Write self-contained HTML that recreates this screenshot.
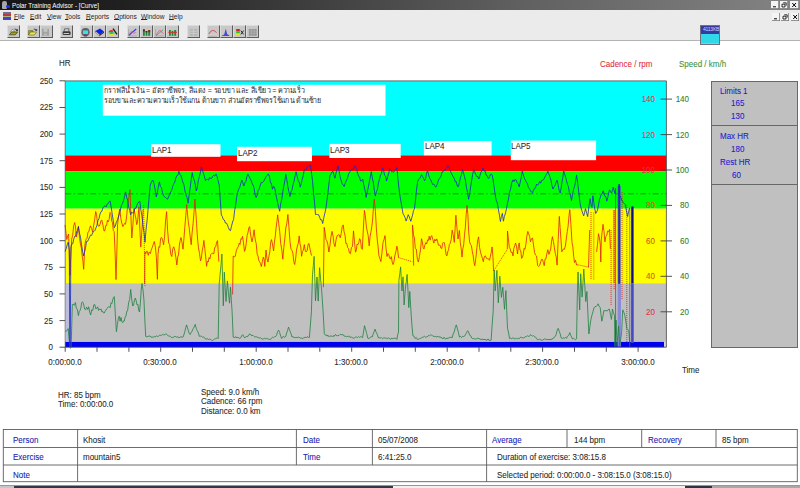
<!DOCTYPE html>
<html><head><meta charset="utf-8"><title>Polar Training Advisor - [Curve]</title>
<style>
html,body{margin:0;padding:0;background:#fff;}
body{width:800px;height:488px;position:relative;overflow:hidden;font-family:"Liberation Sans",sans-serif;}
.t{position:absolute;white-space:nowrap;font-size:8.6px;line-height:10px;color:#2a2a2a;font-family:"Liberation Sans",sans-serif;transform:scaleX(0.9302);transform-origin:0 0;-webkit-text-stroke:0.08px currentColor;}
.c{position:absolute;white-space:nowrap;line-height:10px;font-family:"Liberation Sans",sans-serif;}
.tb{position:absolute;top:25.4px;width:13.1px;height:12.2px;background:#c8c8c8;box-sizing:border-box;border-top:0.5px solid #dcdcdc;border-left:0.5px solid #dcdcdc;border-right:1px solid #5c5c5c;border-bottom:1px solid #5c5c5c;}
</style></head><body>
<svg width="800" height="488" viewBox="0 0 800 488" style="position:absolute;left:0;top:0">
<rect x="65.2" y="80.9" width="601.1999999999999" height="74.5" fill="#00ffff"/>
<rect x="65.2" y="155.4" width="601.1999999999999" height="16.0" fill="#ff0000"/>
<rect x="65.2" y="171.4" width="601.1999999999999" height="37.3" fill="#00ff00"/>
<rect x="65.2" y="208.7" width="601.1999999999999" height="74.6" fill="#ffff00"/>
<rect x="65.2" y="283.3" width="601.1999999999999" height="58.6" fill="#c0c0c0"/>
<rect x="65.2" y="341.9" width="598.8" height="5.3" fill="#0000f0"/>
<rect x="664" y="341.9" width="2.4" height="5.3" fill="#d4d4ec"/>
<rect x="102.8" y="84.8" width="282.7" height="30.9" fill="#fff"/>
<rect x="151.2" y="144.2" width="69.3" height="12.6" fill="#fff"/>
<rect x="237" y="146.8" width="75" height="14.4" fill="#fff"/>
<rect x="329.4" y="143.9" width="71.3" height="14.1" fill="#fff"/>
<rect x="423.9" y="141" width="67.7" height="14.3" fill="#fff"/>
<rect x="510.8" y="140.6" width="85.3" height="19.6" fill="#fff"/>
<line x1="65.2" y1="193.8" x2="666.4" y2="193.8" stroke="#406040" stroke-width="0.8" stroke-dasharray="6 2.5 1.5 2.5"/>
<line x1="65.2" y1="80.9" x2="65.2" y2="347.2" stroke="#484848" stroke-width="0.7"/>
<line x1="65.2" y1="80.9" x2="666.4" y2="80.9" stroke="#505050" stroke-width="0.8"/>
<line x1="666.4" y1="80.9" x2="666.4" y2="347.2" stroke="#484848" stroke-width="0.8"/>
<line x1="65.2" y1="347.2" x2="666.4" y2="347.2" stroke="#404040" stroke-width="0.8"/>
<line x1="59.5" y1="347.2" x2="65.2" y2="347.2" stroke="#404040" stroke-width="0.9"/>
<line x1="59.5" y1="320.6" x2="65.2" y2="320.6" stroke="#404040" stroke-width="0.9"/>
<line x1="59.5" y1="293.9" x2="65.2" y2="293.9" stroke="#404040" stroke-width="0.9"/>
<line x1="59.5" y1="267.3" x2="65.2" y2="267.3" stroke="#404040" stroke-width="0.9"/>
<line x1="59.5" y1="240.7" x2="65.2" y2="240.7" stroke="#404040" stroke-width="0.9"/>
<line x1="59.5" y1="214.0" x2="65.2" y2="214.0" stroke="#404040" stroke-width="0.9"/>
<line x1="59.5" y1="187.4" x2="65.2" y2="187.4" stroke="#404040" stroke-width="0.9"/>
<line x1="59.5" y1="160.7" x2="65.2" y2="160.7" stroke="#404040" stroke-width="0.9"/>
<line x1="59.5" y1="134.1" x2="65.2" y2="134.1" stroke="#404040" stroke-width="0.9"/>
<line x1="59.5" y1="107.5" x2="65.2" y2="107.5" stroke="#404040" stroke-width="0.9"/>
<line x1="59.5" y1="80.8" x2="65.2" y2="80.8" stroke="#404040" stroke-width="0.9"/>
<line x1="660.5" y1="311.8" x2="672" y2="311.8" stroke="#404040" stroke-width="0.9"/>
<line x1="660.5" y1="276.3" x2="672" y2="276.3" stroke="#404040" stroke-width="0.9"/>
<line x1="660.5" y1="240.9" x2="672" y2="240.9" stroke="#404040" stroke-width="0.9"/>
<line x1="660.5" y1="205.4" x2="672" y2="205.4" stroke="#404040" stroke-width="0.9"/>
<line x1="660.5" y1="170.0" x2="672" y2="170.0" stroke="#404040" stroke-width="0.9"/>
<line x1="660.5" y1="134.6" x2="672" y2="134.6" stroke="#404040" stroke-width="0.9"/>
<line x1="660.5" y1="99.1" x2="672" y2="99.1" stroke="#404040" stroke-width="0.9"/>
<line x1="65.2" y1="347.2" x2="65.2" y2="351.8" stroke="#404040" stroke-width="0.9"/>
<line x1="97.0" y1="347.2" x2="97.0" y2="351.8" stroke="#404040" stroke-width="0.9"/>
<line x1="128.9" y1="347.2" x2="128.9" y2="351.8" stroke="#404040" stroke-width="0.9"/>
<line x1="160.7" y1="347.2" x2="160.7" y2="351.8" stroke="#404040" stroke-width="0.9"/>
<line x1="192.5" y1="347.2" x2="192.5" y2="351.8" stroke="#404040" stroke-width="0.9"/>
<line x1="224.3" y1="347.2" x2="224.3" y2="351.8" stroke="#404040" stroke-width="0.9"/>
<line x1="256.2" y1="347.2" x2="256.2" y2="351.8" stroke="#404040" stroke-width="0.9"/>
<line x1="288.0" y1="347.2" x2="288.0" y2="351.8" stroke="#404040" stroke-width="0.9"/>
<line x1="319.8" y1="347.2" x2="319.8" y2="351.8" stroke="#404040" stroke-width="0.9"/>
<line x1="351.7" y1="347.2" x2="351.7" y2="351.8" stroke="#404040" stroke-width="0.9"/>
<line x1="383.5" y1="347.2" x2="383.5" y2="351.8" stroke="#404040" stroke-width="0.9"/>
<line x1="415.3" y1="347.2" x2="415.3" y2="351.8" stroke="#404040" stroke-width="0.9"/>
<line x1="447.2" y1="347.2" x2="447.2" y2="351.8" stroke="#404040" stroke-width="0.9"/>
<line x1="479.0" y1="347.2" x2="479.0" y2="351.8" stroke="#404040" stroke-width="0.9"/>
<line x1="510.8" y1="347.2" x2="510.8" y2="351.8" stroke="#404040" stroke-width="0.9"/>
<line x1="542.6" y1="347.2" x2="542.6" y2="351.8" stroke="#404040" stroke-width="0.9"/>
<line x1="574.5" y1="347.2" x2="574.5" y2="351.8" stroke="#404040" stroke-width="0.9"/>
<line x1="606.3" y1="347.2" x2="606.3" y2="351.8" stroke="#404040" stroke-width="0.9"/>
<line x1="638.1" y1="347.2" x2="638.1" y2="351.8" stroke="#404040" stroke-width="0.9"/>
<rect x="65.6" y="283.6" width="4.7" height="58" fill="#bcbcdc"/>
<rect x="613" y="210" width="2.2" height="73" fill="#c8a030" opacity="0.8"/>
<rect x="617.6" y="186" width="3.2" height="97.5" fill="#5058c8" opacity="0.9"/>
<rect x="617.6" y="283.5" width="3.4" height="63" fill="#8484d8" opacity="0.9"/>
<path d="M65.1 331.2 L66.1 331.1 L67.2 330.4 L68.2 328.6 L69.0 338.3 L69.8 346.3 L70.5 348.3 L71.2 346.3 L72.3 304.5 L73.3 304.1 L74.4 305.4 L75.4 302.5 L76.4 308.7 L77.4 309.3 L78.4 315.6 L79.2 311.7 L80.0 310.5 L80.9 308.0 L81.7 302.6 L82.5 301.8 L83.5 303.6 L84.6 309.0 L85.6 309.8 L86.6 307.1 L87.7 309.5 L88.7 306.8 L89.7 312.1 L90.7 315.0 L91.7 309.8 L92.8 310.5 L93.8 304.8 L94.8 304.6 L95.9 309.0 L96.9 308.0 L97.7 306.8 L98.5 310.4 L99.4 308.8 L100.2 309.9 L101.0 308.9 L101.8 311.9 L102.6 311.2 L103.5 312.9 L104.3 313.0 L105.1 311.2 L105.9 310.2 L106.8 308.5 L107.7 307.7 L108.5 306.7 L109.3 307.1 L110.2 307.6 L111.0 302.8 L111.8 303.7 L112.7 299.8 L113.5 297.4 L114.3 296.6 L115.3 314.0 L116.4 331.7 L117.4 324.7 L118.4 317.9 L119.2 316.2 L120.1 321.2 L121.0 317.4 L121.8 321.5 L122.7 322.7 L123.5 320.9 L124.3 321.0 L125.1 317.0 L126.0 316.0 L126.8 311.2 L127.6 310.8 L128.6 302.8 L129.7 299.4 L130.7 289.5 L131.7 298.9 L132.7 306.0 L133.6 305.1 L134.5 299.8 L135.4 298.0 L136.2 301.0 L137.0 304.8 L137.9 304.3 L138.7 310.0 L139.5 312.0 L140.3 303.7 L141.2 290.1 L142.0 283.5 L143.0 290.0 L144.0 300.9 L144.8 319.2 L145.7 336.4 L146.8 336.8 L147.9 336.4 L148.9 336.2 L150.0 335.9 L151.1 337.2 L152.2 337.1 L153.2 337.3 L154.3 336.4 L155.3 336.9 L156.3 335.8 L157.3 336.5 L158.4 336.2 L159.4 335.4 L160.4 335.4 L161.5 335.4 L162.5 334.3 L163.5 334.8 L164.5 335.0 L165.6 333.8 L166.6 334.3 L167.6 335.1 L168.6 336.2 L169.7 336.0 L170.7 336.7 L171.7 337.6 L172.8 337.6 L173.8 337.0 L174.8 336.4 L175.8 336.6 L176.8 337.3 L177.9 336.7 L178.9 337.9 L179.9 337.3 L180.9 336.6 L182.0 337.4 L183.0 337.0 L183.9 334.8 L184.8 331.7 L185.7 327.9 L186.6 324.9 L187.5 327.7 L188.3 330.4 L189.2 333.3 L190.1 334.5 L191.1 332.7 L192.1 331.1 L193.2 328.5 L194.2 327.0 L195.2 324.4 L196.2 328.3 L197.2 330.5 L198.3 332.6 L199.3 336.3 L200.3 336.1 L201.4 336.3 L202.4 337.2 L203.4 336.9 L204.4 337.5 L205.4 339.0 L206.5 339.1 L207.5 338.6 L208.5 339.9 L209.6 338.8 L210.6 339.6 L211.6 340.2 L212.5 340.6 L213.5 339.8 L214.4 339.0 L215.4 338.8 L216.3 338.5 L217.3 337.7 L218.2 338.6 L219.2 284.4 L220.1 274.4 L221.0 264.8 L221.9 254.0 L223.3 305.8 L224.3 272.2 L225.2 287.7 L226.0 301.6 L227.4 280.9 L228.4 292.7 L229.5 303.2 L230.5 287.2 L231.3 299.7 L232.1 311.5 L233.2 337.1 L234.1 337.6 L235.1 337.2 L236.0 336.7 L236.9 338.0 L237.9 337.3 L238.8 337.8 L239.8 338.5 L240.7 337.8 L241.8 335.7 L242.8 334.6 L243.8 336.7 L244.8 338.0 L245.8 336.8 L246.9 336.4 L247.9 336.4 L249.0 334.4 L250.0 333.9 L251.0 335.3 L252.0 335.4 L253.1 335.4 L254.1 336.4 L255.1 337.1 L256.1 336.6 L257.1 337.2 L258.1 337.3 L259.2 338.3 L260.2 337.6 L261.2 338.3 L262.2 339.1 L263.2 339.1 L264.3 338.3 L265.3 338.8 L266.3 338.4 L267.3 338.7 L268.4 339.0 L269.4 339.4 L270.4 339.6 L271.5 338.1 L272.5 337.2 L273.5 337.7 L274.6 336.6 L275.6 336.6 L276.6 335.2 L277.6 331.6 L278.6 330.1 L279.6 332.4 L280.7 336.2 L281.7 338.5 L282.7 336.8 L283.8 336.5 L284.8 337.4 L285.8 336.2 L286.7 332.9 L287.6 330.4 L288.5 327.1 L289.4 329.4 L290.2 331.9 L291.1 333.8 L292.0 337.0 L293.0 336.6 L294.1 337.6 L295.1 337.7 L296.1 337.0 L297.1 338.0 L298.1 337.1 L299.2 337.3 L300.2 338.2 L301.2 337.9 L302.2 338.6 L303.3 338.0 L304.3 338.0 L305.3 336.9 L306.3 338.0 L307.4 336.6 L308.4 337.4 L309.4 337.5 L310.4 325.0 L311.4 311.9 L312.5 274.6 L313.3 265.7 L314.1 256.4 L315.5 300.8 L316.2 289.7 L317.0 277.0 L318.2 301.1 L319.6 267.7 L320.6 279.1 L321.7 290.8 L323.1 311.7 L324.3 333.6 L325.2 335.0 L326.1 335.7 L327.1 334.9 L328.0 336.5 L328.9 335.7 L329.9 336.7 L330.9 335.5 L332.0 336.7 L333.0 335.7 L334.0 336.5 L335.0 334.8 L336.0 334.8 L337.1 336.0 L338.1 335.6 L339.1 335.4 L340.1 334.4 L341.2 334.6 L342.2 334.8 L343.2 334.6 L344.2 336.2 L345.2 336.1 L346.3 336.7 L347.3 336.6 L348.3 336.3 L349.3 336.1 L350.3 337.6 L351.4 336.8 L352.4 337.9 L353.4 338.1 L354.4 338.0 L355.4 337.1 L356.5 337.0 L357.5 337.6 L358.5 336.6 L359.6 337.4 L360.6 336.6 L361.6 336.9 L362.5 337.8 L363.5 332.1 L364.5 325.7 L365.6 329.4 L366.7 333.5 L367.8 338.2 L368.9 338.6 L370.1 337.5 L371.2 336.7 L372.3 336.9 L373.2 333.9 L374.1 331.8 L375.0 329.2 L376.1 332.1 L377.3 334.5 L378.4 337.9 L379.4 337.8 L380.5 337.9 L381.5 337.7 L382.5 338.7 L383.6 337.9 L384.6 337.9 L385.6 338.2 L386.7 338.2 L387.7 338.6 L388.7 337.9 L389.7 338.6 L390.8 339.3 L391.8 337.9 L392.8 338.9 L393.8 338.5 L394.8 338.1 L395.9 338.2 L396.9 339.4 L397.7 334.9 L398.5 332.2 L398.9 280.3 L399.8 273.8 L400.6 266.9 L402.0 291.0 L403.0 276.9 L404.1 305.0 L405.5 287.0 L406.3 281.5 L407.1 274.4 L408.0 290.9 L408.8 307.6 L409.8 291.4 L411.2 315.3 L412.0 326.1 L412.9 335.7 L414.0 336.2 L415.1 338.5 L416.3 337.5 L417.4 339.5 L418.4 339.2 L419.4 338.8 L420.4 338.5 L421.5 338.0 L422.5 337.0 L423.5 337.0 L424.5 336.3 L425.6 337.2 L426.6 336.8 L427.6 336.6 L428.6 335.3 L429.6 335.7 L430.7 334.8 L431.7 335.3 L432.7 335.8 L433.8 336.5 L434.8 336.3 L435.8 336.6 L436.9 337.0 L437.9 336.1 L438.9 337.3 L439.9 336.6 L441.0 337.6 L442.0 337.7 L443.0 338.9 L444.0 337.3 L445.1 338.9 L446.1 338.9 L447.1 338.0 L448.1 338.7 L449.1 337.3 L450.2 337.5 L451.2 337.2 L452.2 337.7 L453.2 333.9 L454.2 332.0 L455.3 327.4 L456.3 324.9 L457.3 328.5 L458.4 332.3 L459.4 337.0 L460.4 336.3 L461.4 337.6 L462.5 336.3 L463.5 336.5 L464.5 336.2 L465.5 334.6 L466.6 332.6 L467.6 330.7 L468.6 332.0 L469.6 335.2 L470.7 335.7 L471.7 338.0 L472.7 338.7 L473.8 338.4 L474.8 339.2 L475.8 339.0 L476.8 338.6 L477.9 338.0 L478.9 338.9 L479.9 338.8 L480.9 339.6 L482.0 339.1 L483.0 339.3 L484.0 339.7 L485.0 339.2 L486.0 340.0 L487.1 340.2 L488.1 338.9 L489.1 340.4 L490.1 340.4 L491.1 340.2 L492.1 325.4 L493.2 311.3 L494.2 270.1 L495.2 290.9 L496.0 281.4 L496.9 270.4 L498.3 302.8 L499.1 289.6 L499.8 276.2 L500.6 287.1 L501.4 297.4 L502.8 287.3 L503.6 297.4 L504.5 309.3 L505.9 290.6 L506.7 310.2 L507.5 328.2 L508.6 333.0 L509.6 338.6 L510.6 338.1 L511.6 338.6 L512.5 338.1 L513.5 337.9 L514.5 339.0 L515.5 338.7 L516.4 338.3 L517.4 338.8 L518.4 338.4 L519.4 338.6 L520.3 337.3 L521.3 337.4 L522.3 337.7 L523.3 337.9 L524.3 337.8 L525.4 336.4 L526.4 336.7 L527.4 335.7 L528.4 336.4 L529.5 336.2 L530.5 334.6 L531.5 335.5 L532.5 336.0 L533.6 335.7 L534.6 336.8 L535.6 337.1 L536.6 338.8 L537.7 339.9 L538.7 339.5 L539.7 339.2 L540.8 339.9 L541.8 340.3 L542.8 340.0 L543.8 339.4 L544.9 338.7 L545.9 339.6 L546.9 339.3 L547.9 339.8 L549.0 339.3 L550.0 339.6 L551.0 339.6 L552.0 338.8 L553.0 338.8 L554.1 337.2 L555.1 336.6 L556.1 334.7 L557.2 330.1 L558.2 328.4 L559.2 331.2 L560.2 333.9 L561.2 337.9 L562.2 338.5 L563.3 337.9 L564.3 338.3 L565.4 337.4 L566.4 338.4 L567.5 336.2 L568.7 335.3 L569.8 332.6 L570.7 335.3 L571.6 337.0 L572.5 339.0 L573.5 338.2 L574.5 339.2 L575.6 339.7 L576.6 338.7 L577.2 301.1 L578.0 272.0 L578.9 291.8 L579.7 309.9 L580.7 273.8 L582.1 297.1 L583.0 282.5 L583.8 269.1 L584.8 285.7 L585.8 301.5 L586.9 291.5 L587.9 313.2 L588.9 333.9 L589.9 326.4 L590.9 319.7 L591.9 315.3 L593.0 311.6 L594.0 307.8 L595.0 306.5 L596.0 306.7 L597.1 305.5 L598.1 303.8 L599.2 306.3 L600.2 307.6 L601.0 314.8 L601.8 321.2 L602.8 316.8 L603.9 310.5 L605.0 310.9 L606.2 310.6 L607.3 311.0 L608.3 309.6 L609.4 309.1 L610.4 314.2 L611.4 319.4 L612.5 309.0 L613.5 312.9 L614.5 315.8 L614.9 346.3 L616.1 320.1 L617.0 346.3 L617.8 335.5 L618.6 326.0 L619.6 346.3 L620.7 339.3 L621.7 331.6 L622.7 309.8 L623.8 312.2 L624.8 315.3 L625.8 321.2 L626.8 328.3 L627.8 329.4 L628.9 331.9 L629.9 346.3" fill="none" stroke="#208040" stroke-width="0.8" stroke-linejoin="round"/>
<path d="M65.0 224.9 L65.9 232.2 L66.8 239.5 L67.7 236.1 L68.6 234.0 L69.6 262.2 L70.1 275.4 L70.5 262.0 L71.7 239.0 L72.7 235.3 L73.7 225.6 L74.7 222.5 L75.5 227.0 L76.3 237.0 L77.4 233.1 L78.5 226.5 L79.5 237.3 L80.4 243.9 L81.4 248.0 L82.2 256.0 L82.9 260.6 L83.7 269.3 L84.8 245.6 L85.6 240.4 L86.3 239.0 L87.1 238.2 L87.9 232.3 L88.8 231.7 L89.7 228.1 L90.5 225.8 L91.6 228.6 L92.7 232.2 L93.7 225.1 L94.7 219.4 L95.7 211.5 L96.6 214.7 L97.5 223.8 L98.4 226.1 L99.2 226.2 L100.1 224.2 L101.0 220.5 L101.8 220.1 L102.9 224.9 L104.0 231.0 L104.8 230.8 L105.7 225.6 L106.6 225.6 L107.4 220.4 L108.2 221.9 L109.1 219.5 L110.0 212.4 L110.8 213.3 L111.7 221.0 L112.5 222.7 L113.3 230.5 L114.2 231.7 L115.1 252.9 L116.0 279.6 L116.8 254.0 L117.6 224.6 L118.7 214.6 L119.8 209.0 L120.8 218.3 L121.8 223.0 L122.8 226.6 L123.7 225.0 L124.6 223.3 L125.5 224.2 L126.6 216.9 L127.7 204.2 L128.5 200.3 L129.2 194.7 L130.0 189.6 L130.9 215.9 L131.8 238.0 L132.9 224.9 L134.0 208.5 L134.9 214.1 L135.8 218.0 L136.7 224.6 L137.5 222.1 L138.2 215.0 L139.0 206.7 L139.9 229.9 L140.8 247.1 L141.6 234.2 L142.3 224.4 L143.1 209.3" fill="none" stroke="#e02010" stroke-width="0.8" stroke-linejoin="round"/>
<path d="M144.5 283.9 L145.0 251.8 L145.8 253.6 L146.6 251.3 L147.4 251.4 L148.2 255.3 L149.2 252.1 L150.3 253.5 L151.3 249.8 L152.3 247.3 L153.3 244.3 L154.3 241.5 L155.4 247.1 L156.4 257.5 L157.4 279.3 L158.0 254.3 L158.9 246.6 L159.8 247.3 L160.6 238.4 L161.5 237.4 L162.6 240.0 L163.6 244.8 L164.6 236.4 L165.6 220.3 L166.6 211.6 L167.6 230.4 L168.7 243.0 L169.7 244.6 L170.8 254.5 L171.8 256.5 L172.8 248.8 L173.8 246.8 L174.8 250.6 L175.9 257.7 L176.9 265.0 L177.7 257.1 L178.5 254.9 L179.4 245.2 L180.2 240.5 L181.0 237.6 L182.0 242.6 L183.0 249.2 L183.9 239.0 L184.8 227.3 L185.8 215.7 L186.7 204.5 L187.5 214.0 L188.4 222.7 L189.2 227.9 L190.2 237.0 L191.2 244.7 L192.1 232.9 L193.1 223.7 L194.0 212.4 L194.9 199.2 L195.7 210.6 L196.6 223.8 L197.4 237.0 L198.4 247.2 L199.5 253.5 L200.5 260.8 L201.3 258.6 L202.2 250.9 L203.1 246.3 L203.9 240.4 L204.8 248.8 L205.7 256.8 L206.6 266.3 L207.4 261.2 L208.2 262.0 L209.1 257.6 L209.9 258.9 L210.7 254.7 L211.7 253.5 L212.8 253.2 L213.8 253.8 L214.7 247.5 L215.7 247.0 L216.6 242.3 L217.5 240.6 L218.2 251.2 L218.9 261.7" fill="none" stroke="#e02010" stroke-width="0.8" stroke-linejoin="round"/>
<path d="M232.6 294.5 L233.2 256.0 L234.2 256.8 L235.3 256.3 L236.3 250.7 L237.4 248.1 L238.4 246.3 L239.2 243.2 L240.0 244.5 L240.9 238.6 L241.7 239.2 L242.5 236.4 L243.5 242.9 L244.5 251.4 L245.3 249.4 L246.2 243.7 L247.1 235.6 L247.9 233.0 L248.8 227.9 L249.6 226.6 L250.4 233.0 L251.2 238.1 L252.0 241.9 L253.1 236.6 L254.1 229.8 L255.1 239.0 L256.2 243.7 L257.2 254.2 L258.0 256.1 L258.8 260.5 L259.7 261.9 L260.5 263.7 L261.3 266.5 L262.3 261.8 L263.3 257.2 L264.1 259.3 L264.8 266.4 L266.0 250.0 L267.0 258.7 L268.0 262.1 L268.9 256.4 L269.8 252.0 L270.6 242.5 L271.5 239.6 L272.6 245.0 L273.6 250.9 L274.4 242.2 L275.2 236.9 L276.1 227.8 L276.9 221.7 L277.7 214.8 L278.7 223.5 L279.7 231.4 L280.7 243.3 L281.8 249.8 L282.8 259.2 L283.8 247.5 L284.8 238.9 L285.8 227.9 L286.9 223.1 L287.9 214.5 L288.9 226.7 L290.0 241.6 L291.0 249.1 L292.0 250.6 L292.9 253.3 L293.8 261.7 L294.7 264.5 L295.6 258.9 L296.5 250.1 L297.4 246.0 L298.3 243.2 L299.2 235.9 L300.0 243.9 L300.8 246.9 L301.6 256.3 L302.5 251.4 L303.4 250.1 L304.3 244.6 L305.4 251.4 L306.4 251.7 L307.3 250.2 L308.1 244.2 L309.0 243.5 L309.8 247.9 L310.7 252.1 L311.5 255.6" fill="none" stroke="#e02010" stroke-width="0.8" stroke-linejoin="round"/>
<path d="M323.4 287.2 L324.2 227.3 L325.1 232.6 L325.9 239.3 L326.8 240.7 L327.9 244.8 L328.9 252.0 L329.9 245.7 L331.0 236.6 L332.0 231.4 L333.0 235.8 L334.0 243.7 L335.0 246.6 L336.1 239.5 L337.1 235.9 L338.1 234.9 L339.2 234.9 L340.2 237.7 L341.2 233.8 L342.2 226.7 L343.2 224.9 L344.1 232.0 L345.0 235.0 L345.9 243.6 L346.8 243.4 L347.6 247.4 L348.5 248.3 L349.4 252.9 L350.4 253.8 L351.5 247.4 L352.5 246.3 L353.5 230.9 L354.5 241.9 L355.5 252.2 L356.3 250.2 L357.1 244.1 L358.0 244.7 L358.8 242.5 L359.6 238.6 L360.5 240.0 L361.4 248.4 L362.3 249.4 L363.4 228.0 L364.4 210.4 L365.3 215.5 L366.3 226.1 L367.2 231.0 L368.2 235.6 L369.2 245.9 L370.1 236.5 L371.0 231.6 L371.9 226.0 L372.7 219.1 L373.5 205.8 L374.3 199.1 L375.4 211.3 L376.4 228.9 L377.2 239.0 L378.1 246.9 L378.9 255.5 L379.9 258.6 L380.9 261.6 L381.9 253.1 L383.0 242.5 L384.0 239.5 L385.0 235.6 L386.0 248.2 L387.0 256.5 L387.9 253.5 L388.8 254.7 L389.7 258.0 L390.5 259.1 L391.3 256.6 L392.2 262.0 L393.0 264.5 L393.8 262.5 L394.8 255.9 L395.9 251.5 L396.9 246.2 L397.7 249.9 L398.5 257.6" fill="none" stroke="#e02010" stroke-width="0.8" stroke-linejoin="round"/>
<path d="M413.7 265.7 L412.5 224.9 L413.4 234.6 L414.4 238.0 L415.3 248.4 L416.3 249.1 L417.4 259.4 L418.4 262.1 L419.4 256.5 L420.5 249.9 L421.5 238.7 L422.3 241.6 L423.1 247.3 L423.9 249.0 L424.8 245.3 L425.8 242.6 L426.7 244.0 L427.6 239.9 L428.4 240.5 L429.2 236.2 L430.1 240.1 L430.9 236.8 L431.7 235.6 L432.8 239.4 L433.8 243.1 L434.8 239.2 L435.8 241.0 L436.8 238.9 L437.6 241.3 L438.4 245.2 L439.3 245.1 L440.1 245.2 L440.9 248.1 L441.8 248.5 L442.7 243.2 L443.6 242.1 L444.4 242.9 L445.3 248.5 L446.1 254.9 L446.9 255.9 L447.7 251.9 L448.6 249.6 L449.4 244.4 L450.2 243.3 L451.2 239.6 L452.2 230.2 L453.2 234.7 L454.3 242.4 L455.1 228.7 L455.9 215.3 L456.9 227.3 L458.0 239.0 L458.7 235.1 L459.4 230.4 L460.3 242.7 L461.1 247.8 L462.0 257.1 L462.8 248.9 L463.7 244.7 L464.5 234.7 L465.3 227.8 L466.2 214.3 L467.0 205.3 L467.9 214.6 L468.7 231.9 L469.6 241.8 L470.5 244.5 L471.4 245.6 L472.3 251.5 L473.1 255.1 L474.0 262.5 L474.8 265.7 L476.1 256.1 L476.9 247.7 L477.8 239.7 L478.6 236.9 L479.6 247.6 L480.7 252.8 L481.6 255.9 L482.4 258.2 L483.3 261.7 L484.3 256.7 L485.4 255.8 L486.4 258.3 L487.4 258.7 L488.5 258.8 L489.5 260.3 L490.4 256.2 L491.2 252.7 L492.1 246.9 L492.9 256.5 L493.6 270.9" fill="none" stroke="#e02010" stroke-width="0.8" stroke-linejoin="round"/>
<path d="M507.3 249.1 L507.5 231.0 L508.4 238.7 L509.3 247.3 L510.2 248.9 L511.1 252.5 L512.1 252.0 L513.0 255.9 L513.8 248.4 L514.7 246.1 L515.5 243.0 L516.5 246.1 L517.5 254.0 L518.4 246.7 L519.2 242.9 L520.0 250.3 L520.8 250.9 L521.6 258.4 L522.4 257.5 L523.2 254.6 L524.1 248.4 L524.9 249.3 L525.9 244.4 L526.8 236.5 L527.8 231.4 L528.7 233.8 L529.6 236.6 L530.5 241.8 L531.5 238.7 L532.5 238.0 L533.5 244.9 L534.6 252.7 L535.6 255.2 L536.6 256.1 L537.6 265.4 L538.6 266.5 L539.6 265.6 L540.7 261.9 L541.7 259.2 L542.5 259.5 L543.4 262.5 L544.2 265.7 L545.1 258.9 L545.9 258.9 L546.8 254.0 L547.8 249.7 L548.9 254.4 L549.9 251.5 L550.7 249.0 L551.6 241.1 L552.4 236.7 L553.4 241.5 L554.4 247.6 L555.3 253.5 L556.2 256.6 L557.1 265.1 L558.2 239.5 L559.3 216.4 L560.1 227.4 L561.0 240.1 L561.8 251.8 L562.6 250.2 L563.5 248.9 L564.3 249.4 L565.3 246.2 L566.3 238.9 L567.3 231.3 L568.1 226.2 L569.0 215.6 L569.8 209.7 L570.9 224.3 L572.0 242.5 L572.8 246.3 L573.7 256.4 L574.5 262.5 L575.5 260.3 L576.6 265.0 L577.6 264.8" fill="none" stroke="#e02010" stroke-width="0.8" stroke-linejoin="round"/>
<path d="M588.5 267.4 L589.7 230.0" fill="none" stroke="#e02010" stroke-width="0.8" stroke-linejoin="round"/>
<path d="M596.6 251.9 L597.5 244.3 L598.5 233.7 L599.4 237.6 L600.3 245.0 L600.8 262.0 L601.3 240.0 L602.1 232.1 L603.0 224.3 L604.0 231.5 L604.9 241.8 L605.8 236.6 L606.8 235.2 L607.7 231.0 L608.6 231.8 L609.5 229.4 L610.4 248.8" fill="none" stroke="#e02010" stroke-width="0.8" stroke-linejoin="round"/>
<path d="M143.6 205 L145 287" fill="none" stroke="#e02010" stroke-width="0.8" stroke-dasharray="1.1 0.9"/>
<path d="M398.5 257.6 L412.3 261.7" fill="none" stroke="#e02010" stroke-width="0.8" stroke-dasharray="1.1 0.9"/>
<path d="M493.6 270.9 L507.3 249.4" fill="none" stroke="#e02010" stroke-width="0.8" stroke-dasharray="1.1 0.9"/>
<path d="M577.6 264.8 L588.5 267" fill="none" stroke="#e02010" stroke-width="0.8" stroke-dasharray="1.1 0.9"/>
<path d="M591 212 V280" fill="none" stroke="#e02010" stroke-width="0.8" stroke-dasharray="1.1 0.9"/>
<path d="M593.8 212.5 V280" fill="none" stroke="#e02010" stroke-width="0.8" stroke-dasharray="1.1 0.9"/>
<path d="M611.1 230 V305" fill="none" stroke="#e02010" stroke-width="0.8" stroke-dasharray="1.1 0.9"/>
<path d="M626.8 205 V342" fill="none" stroke="#e02010" stroke-width="0.8" stroke-dasharray="1.1 0.9"/>
<path d="M622 192 V300" fill="none" stroke="#e02010" stroke-width="0.8" stroke-dasharray="1.1 0.9"/>
<path d="M614.2 210 V290" fill="none" stroke="#e02010" stroke-width="0.8" stroke-dasharray="1.1 0.9"/>
<path d="M65.1 251.6 L66.1 248.8 L67.2 244.9 L68.2 242.2 L69.3 250.2 L69.8 346.0 L70.2 346.0 L70.9 247.3 L71.8 243.8 L72.8 243.7 L73.7 239.2 L74.7 236.4 L75.6 236.2 L76.5 231.9 L77.5 230.4 L78.4 226.6 L79.4 232.9 L80.5 237.2 L81.5 244.7 L82.6 251.3 L83.6 256.0 L84.6 252.1 L85.6 247.2 L86.6 241.3 L87.6 241.3 L88.7 239.2 L89.7 236.7 L90.7 235.0 L91.7 235.3 L92.8 232.4 L93.8 231.6 L94.9 230.5 L95.9 227.9 L96.9 225.6 L97.9 220.6 L99.0 218.6 L100.0 214.1 L101.0 211.7 L102.0 211.1 L103.0 207.5 L104.1 206.5 L105.1 205.6 L106.1 206.9 L107.1 204.1 L108.2 203.6 L109.2 201.5 L110.2 201.0 L111.2 207.3 L112.2 213.8 L113.3 221.2 L114.3 227.7 L115.3 226.0 L116.3 222.3 L117.4 220.2 L118.4 217.1 L119.4 213.8 L120.4 210.0 L121.5 204.9 L122.5 203.6 L123.5 200.4 L124.6 196.6 L125.6 191.9 L126.6 197.1 L127.6 200.2 L128.7 206.8 L129.7 210.6 L130.7 214.7 L131.7 212.1 L132.8 213.1 L133.8 212.1 L134.8 208.3 L135.8 208.4 L136.8 205.5 L137.9 203.1 L138.9 201.9 L139.9 201.4 L140.9 210.4 L141.9 215.9 L143.0 226.0 L144.0 232.3 L145.0 242.3 L146.0 230.0 L147.1 220.3 L148.1 209.1 L149.2 196.1 L150.2 185.4 L151.2 182.6 L152.2 180.5 L153.2 180.7 L154.2 184.5 L155.3 190.5 L156.3 196.9 L157.3 192.5 L158.4 186.2 L159.4 181.8 L160.4 186.6 L161.4 187.7 L162.5 192.7 L163.5 195.4 L164.5 196.8 L165.5 197.5 L166.6 198.4 L167.6 199.2 L168.6 196.8 L169.7 194.2 L170.7 191.8 L171.7 190.3 L172.7 186.4 L173.8 183.7 L174.8 182.1 L175.8 178.0 L176.8 175.7 L177.9 175.3 L178.9 171.3 L179.9 174.3 L180.9 175.3 L182.0 179.4 L183.0 182.6 L184.0 185.1 L185.0 191.1 L186.1 195.2 L187.1 197.5 L188.1 203.2 L189.1 195.2 L190.1 188.2 L191.2 179.5 L192.2 172.6 L193.2 177.7 L194.2 180.0 L195.3 184.7 L196.3 191.0 L197.3 187.5 L198.3 180.5 L199.4 176.5 L200.4 172.2 L201.4 166.9 L202.4 170.1 L203.4 173.3 L204.5 176.8 L205.5 180.7 L206.5 179.4 L207.5 179.3 L208.6 180.1 L209.6 177.3 L210.6 178.5 L211.7 178.3 L212.8 176.2 L213.8 175.1 L214.9 176.1 L216.0 173.9 L217.1 176.7 L218.1 181.0 L219.2 184.9 L220.2 198.7 L221.3 215.0 L222.3 216.4 L223.3 219.6 L224.4 220.0 L225.4 223.0 L226.4 223.0 L227.4 224.8 L228.4 227.6 L229.5 230.1 L230.5 230.6 L231.5 226.1 L232.6 222.0 L233.6 219.4 L234.6 210.9 L235.6 205.4 L236.6 197.4 L237.6 192.4 L238.7 189.2 L239.7 187.4 L240.8 183.4 L241.8 180.0 L242.8 182.6 L243.8 186.0 L244.8 182.9 L245.9 181.4 L246.9 176.6 L247.9 174.1 L248.9 176.1 L249.9 178.1 L251.0 180.2 L252.0 183.2 L253.0 185.0 L254.1 188.1 L255.1 194.7 L256.1 197.5 L257.1 195.4 L258.1 190.5 L259.2 189.1 L260.2 185.3 L261.2 182.4 L262.2 182.8 L263.3 181.8 L264.3 180.0 L265.3 178.2 L266.3 176.2 L267.4 175.1 L268.4 173.9 L269.4 176.5 L270.4 181.8 L271.5 184.4 L272.5 189.2 L273.5 186.2 L274.5 187.2 L275.5 192.1 L276.6 197.8 L277.6 202.6 L278.7 207.6 L279.7 211.3 L280.7 203.5 L281.7 199.7 L282.8 191.7 L283.8 186.0 L284.8 181.0 L285.8 174.3 L286.8 179.7 L287.9 187.0 L288.9 191.6 L289.9 196.6 L290.9 192.0 L292.0 189.9 L293.0 184.5 L294.0 181.4 L295.1 175.9 L296.1 171.8 L297.1 176.0 L298.1 180.5 L299.2 182.0 L300.2 187.1 L301.2 183.8 L302.2 179.4 L303.3 175.3 L304.3 169.4 L305.3 169.8 L306.3 169.7 L307.4 166.2 L308.4 166.1 L309.4 165.2 L310.4 165.1 L311.4 172.6 L312.5 180.5 L313.5 193.0 L314.5 202.1 L315.5 214.6 L316.5 214.4 L317.6 214.6 L318.6 214.7 L319.6 217.2 L320.6 219.9 L321.7 219.8 L322.7 223.5 L323.7 218.1 L324.8 213.4 L325.8 209.0 L326.8 201.5 L327.9 193.1 L328.9 184.2 L329.9 175.9 L330.9 174.2 L332.0 171.8 L333.0 171.4 L334.0 175.5 L335.0 178.2 L336.0 173.0 L337.1 169.2 L338.1 165.9 L339.1 171.2 L340.1 176.6 L341.1 180.3 L342.1 183.5 L343.2 185.0 L344.2 186.5 L345.2 183.3 L346.2 180.9 L347.3 178.7 L348.3 174.9 L349.3 172.6 L350.3 171.1 L351.4 169.4 L352.4 169.3 L353.4 168.8 L354.5 165.8 L355.5 166.0 L356.5 168.7 L357.5 173.1 L358.6 176.1 L359.6 177.2 L360.6 181.1 L361.6 180.9 L362.7 179.1 L363.8 185.2 L365.0 189.9 L366.1 197.4 L367.1 192.3 L368.2 187.9 L369.2 182.5 L370.3 177.0 L371.3 171.7 L372.3 177.9 L373.4 182.8 L374.4 190.8 L375.4 196.1 L376.4 191.7 L377.4 189.6 L378.4 183.1 L379.5 179.2 L380.5 175.1 L381.5 173.5 L382.5 167.7 L383.5 169.8 L384.6 175.4 L385.6 176.2 L386.6 181.1 L387.6 177.0 L388.7 173.4 L389.7 168.9 L390.7 169.8 L391.8 171.9 L392.8 171.6 L393.8 172.1 L394.9 170.3 L395.9 169.9 L396.9 167.6 L397.9 178.6 L399.0 188.7 L400.0 196.2 L401.0 201.8 L402.0 208.0 L403.0 213.8 L404.0 215.2 L405.1 217.7 L406.1 221.1 L407.1 218.3 L408.2 214.7 L409.1 216.4 L409.9 218.7 L410.8 221.3 L411.7 217.9 L412.6 215.1 L413.4 210.9 L414.3 209.2 L415.3 201.8 L416.4 191.1 L417.4 182.9 L418.4 179.4 L419.4 179.0 L420.5 177.2 L421.5 174.6 L422.5 176.4 L423.5 178.4 L424.5 180.7 L425.5 178.7 L426.6 173.2 L427.6 170.7 L428.6 174.9 L429.6 178.2 L430.7 179.8 L431.7 182.4 L432.7 184.5 L433.8 184.1 L434.8 185.7 L435.8 187.2 L436.8 185.4 L437.9 182.0 L438.9 179.1 L439.9 178.0 L441.0 176.3 L442.0 172.0 L443.0 171.9 L444.0 170.0 L445.1 170.3 L446.1 168.4 L447.1 166.4 L448.1 165.6 L449.1 166.9 L450.1 170.7 L451.2 172.7 L452.2 174.9 L453.2 176.8 L454.3 178.6 L455.3 181.9 L456.3 181.7 L457.4 186.3 L458.4 186.6 L459.4 182.6 L460.4 177.8 L461.5 174.6 L462.5 169.7 L463.5 173.1 L464.5 176.7 L465.5 180.9 L466.5 187.8 L467.6 192.4 L468.6 199.3 L469.6 194.4 L470.6 186.9 L471.7 180.2 L472.7 174.3 L473.7 169.5 L474.7 171.8 L475.8 174.8 L476.8 176.5 L477.9 176.6 L478.9 179.0 L479.9 175.7 L480.9 172.3 L482.0 170.9 L483.0 167.8 L484.0 170.7 L485.0 170.9 L486.1 175.1 L487.1 175.6 L488.1 178.3 L489.1 178.1 L490.1 175.0 L491.2 174.0 L492.2 174.8 L493.2 180.5 L494.2 187.5 L495.2 194.9 L496.2 200.2 L497.3 202.8 L498.3 208.9 L499.4 215.1 L500.4 221.5 L501.4 216.5 L502.4 213.4 L503.4 221.2 L504.4 216.4 L505.5 213.1 L506.5 208.6 L507.5 203.1 L508.5 199.0 L509.6 191.9 L510.6 189.1 L511.6 183.2 L513.0 179.9 L514.0 181.6 L515.1 179.4 L516.1 179.9 L517.1 182.7 L518.2 183.6 L519.2 186.9 L520.2 182.0 L521.3 177.4 L522.3 170.9 L523.3 174.8 L524.3 178.2 L525.3 180.1 L526.4 182.3 L527.4 183.7 L528.4 187.7 L529.4 188.5 L530.5 190.9 L531.5 192.1 L532.5 192.9 L533.5 189.7 L534.5 189.2 L535.6 187.1 L536.6 184.1 L537.6 185.2 L538.7 183.7 L539.7 181.3 L540.7 183.2 L541.8 180.0 L542.8 180.2 L543.8 179.4 L544.8 177.1 L545.9 175.2 L546.9 173.6 L547.9 171.2 L548.9 174.2 L549.9 177.2 L551.0 180.4 L552.0 185.9 L553.0 189.1 L554.0 186.8 L555.0 185.4 L556.1 182.1 L557.1 180.1 L558.1 184.6 L559.2 190.6 L560.2 193.1 L561.1 188.2 L562.0 181.7 L562.8 177.8 L563.7 171.1 L564.6 173.8 L565.6 177.1 L566.5 180.6 L567.5 184.4 L568.4 186.4 L569.4 192.5 L570.5 195.0 L571.5 200.6 L572.5 194.6 L573.5 189.5 L574.6 186.5 L575.6 181.2 L576.6 174.9 L577.7 183.5 L578.9 193.3 L580.0 203.1 L580.9 207.4 L581.8 210.4 L582.8 213.5 L583.7 215.9 L584.6 212.5 L585.5 208.6 L586.6 212.9 L587.7 216.6 L588.9 206.8 L590.1 198.6 L591.0 204.5 L592.0 207.4 L592.9 195.8 L593.8 202.7 L594.8 209.0 L595.7 213.5 L596.6 212.0 L597.5 210.1 L598.5 204.9 L599.4 199.8 L600.3 197.5 L601.2 194.2 L602.2 193.9 L603.1 190.7 L604.0 193.5 L605.0 196.5 L605.9 196.7 L606.8 201.2 L607.7 197.7 L608.6 193.4 L609.5 189.8 L610.5 191.5 L611.4 193.0 L612.3 190.8 L613.2 187.2 L614.1 190.7 L615.0 193.7 L615.6 188.0" fill="none" stroke="#1828c8" stroke-width="0.8" stroke-linejoin="round"/>
<path d="M615.6 188 V347" stroke="#304868" stroke-width="0.7" fill="none"/>
<path d="M619.1 184 V284" stroke="#1818a8" stroke-width="1.3" fill="none"/>
<path d="M620.3 196 L621.7 200 L623.4 202.7 L625.2 204.5 L627.6 216.5 L629.4 208.2 L629.8 208" stroke="#1828c8" stroke-width="0.8" fill="none"/>
<path d="M629.8 208 V347" stroke="#2838b0" stroke-width="0.6" fill="none"/>
<path d="M632.4 206.4 V283.5" stroke="#101080" stroke-width="2.4" fill="none"/>
<path d="M632.4 283.5 V343" stroke="#4848c0" stroke-width="2.6" fill="none"/>
<text x="104" y="92.8" font-size="8px" fill="#2c2c2c" font-family="&quot;Liberation Sans&quot;, sans-serif" textLength="200.2" lengthAdjust="spacingAndGlyphs">กราฟสีน้ำเงิน = อัตราชีพจร, สีแดง = รอบขา และ สีเขียว = ความเร็ว</text>
<text x="104" y="102.7" font-size="8px" fill="#2c2c2c" font-family="&quot;Liberation Sans&quot;, sans-serif" textLength="217.1" lengthAdjust="spacingAndGlyphs">รอบขาและความความเร็วใช้แกน ด้านขวา ส่วนอัตราชีพจรใช้แกน ด้านซ้าย</text>
</svg>
<div class="t" style="left:-7px;width:60px;text-align:right;transform-origin:100% 0;top:342.1px;color:#2a2a2a;">0</div><div class="t" style="left:-7px;width:60px;text-align:right;transform-origin:100% 0;top:315.5px;color:#2a2a2a;">25</div><div class="t" style="left:-7px;width:60px;text-align:right;transform-origin:100% 0;top:288.8px;color:#2a2a2a;">50</div><div class="t" style="left:-7px;width:60px;text-align:right;transform-origin:100% 0;top:262.2px;color:#2a2a2a;">75</div><div class="t" style="left:-7px;width:60px;text-align:right;transform-origin:100% 0;top:235.6px;color:#2a2a2a;">100</div><div class="t" style="left:-7px;width:60px;text-align:right;transform-origin:100% 0;top:208.9px;color:#2a2a2a;">125</div><div class="t" style="left:-7px;width:60px;text-align:right;transform-origin:100% 0;top:182.3px;color:#2a2a2a;">150</div><div class="t" style="left:-7px;width:60px;text-align:right;transform-origin:100% 0;top:155.6px;color:#2a2a2a;">175</div><div class="t" style="left:-7px;width:60px;text-align:right;transform-origin:100% 0;top:129.0px;color:#2a2a2a;">200</div><div class="t" style="left:-7px;width:60px;text-align:right;transform-origin:100% 0;top:102.4px;color:#2a2a2a;">225</div><div class="t" style="left:-7px;width:60px;text-align:right;transform-origin:100% 0;top:75.7px;color:#2a2a2a;">250</div><div class="t" style="left:594.5px;width:60px;text-align:right;transform-origin:100% 0;top:306.7px;color:#e03048;">20</div><div class="t" style="left:629px;width:60px;text-align:right;transform-origin:100% 0;top:306.7px;color:#308030;">20</div><div class="t" style="left:594.5px;width:60px;text-align:right;transform-origin:100% 0;top:271.2px;color:#d05a08;">40</div><div class="t" style="left:629px;width:60px;text-align:right;transform-origin:100% 0;top:271.2px;color:#308030;">40</div><div class="t" style="left:594.5px;width:60px;text-align:right;transform-origin:100% 0;top:235.8px;color:#d05a08;">60</div><div class="t" style="left:629px;width:60px;text-align:right;transform-origin:100% 0;top:235.8px;color:#308030;">60</div><div class="t" style="left:594.5px;width:60px;text-align:right;transform-origin:100% 0;top:200.3px;color:#d05a08;">80</div><div class="t" style="left:629px;width:60px;text-align:right;transform-origin:100% 0;top:200.3px;color:#308030;">80</div><div class="t" style="left:594.5px;width:60px;text-align:right;transform-origin:100% 0;top:164.9px;color:#e03048;">100</div><div class="t" style="left:629px;width:60px;text-align:right;transform-origin:100% 0;top:164.9px;color:#308030;">100</div><div class="t" style="left:594.5px;width:60px;text-align:right;transform-origin:100% 0;top:129.5px;color:#e03048;">120</div><div class="t" style="left:629px;width:60px;text-align:right;transform-origin:100% 0;top:129.5px;color:#308030;">120</div><div class="t" style="left:594.5px;width:60px;text-align:right;transform-origin:100% 0;top:94.0px;color:#e03048;">140</div><div class="t" style="left:629px;width:60px;text-align:right;transform-origin:100% 0;top:94.0px;color:#308030;">140</div><div class="t" style="left:25.0px;width:80px;text-align:center;transform-origin:50% 0;top:357.0px;color:#2a2a2a;">0:00:00.0</div><div class="t" style="left:120.49000000000001px;width:80px;text-align:center;transform-origin:50% 0;top:357.0px;color:#2a2a2a;">0:30:00.0</div><div class="t" style="left:215.98000000000002px;width:80px;text-align:center;transform-origin:50% 0;top:357.0px;color:#2a2a2a;">1:00:00.0</div><div class="t" style="left:311.46999999999997px;width:80px;text-align:center;transform-origin:50% 0;top:357.0px;color:#2a2a2a;">1:30:00.0</div><div class="t" style="left:406.96px;width:80px;text-align:center;transform-origin:50% 0;top:357.0px;color:#2a2a2a;">2:00:00.0</div><div class="t" style="left:502.44999999999993px;width:80px;text-align:center;transform-origin:50% 0;top:357.0px;color:#2a2a2a;">2:30:00.0</div><div class="t" style="left:597.9399999999999px;width:80px;text-align:center;transform-origin:50% 0;top:357.0px;color:#2a2a2a;">3:00:00.0</div><div class="t" style="left:59px;top:58.0px;color:#2a2a2a;">HR</div><div class="t" style="left:600.2px;top:59.4px;color:#e03040;">Cadence / rpm</div><div class="t" style="left:678.7px;top:59.4px;color:#409040;">Speed / km/h</div><div class="t" style="left:681.5px;top:365.0px;color:#2a2a2a;">Time</div><div class="t" style="left:152px;top:145.0px;color:#2a2a2a;">LAP1</div><div class="t" style="left:237.6px;top:148.0px;color:#2a2a2a;">LAP2</div><div class="t" style="left:330.2px;top:144.8px;color:#2a2a2a;">LAP3</div><div class="t" style="left:424.7px;top:140.8px;color:#2a2a2a;">LAP4</div><div class="t" style="left:511.4px;top:140.8px;color:#2a2a2a;">LAP5</div><div class="t" style="left:57.7px;top:389.7px;color:#2a2a2a;">HR: 85 bpm</div><div class="t" style="left:57.7px;top:399.2px;color:#2a2a2a;">Time: 0:00:00.0</div><div class="t" style="left:200.6px;top:387.0px;color:#2a2a2a;">Speed: 9.0 km/h</div><div class="t" style="left:200.6px;top:396.4px;color:#2a2a2a;">Cadence: 66 rpm</div><div class="t" style="left:200.6px;top:405.6px;color:#2a2a2a;">Distance: 0.0 km</div><div style="position:absolute;left:711px;top:81px;width:86.5px;height:266.5px;background:#c0c0c0;border:1px solid #686868;box-sizing:border-box"></div><div style="position:absolute;left:711px;top:125px;width:86px;height:1px;background:#686868"></div><div style="position:absolute;left:711px;top:184px;width:86px;height:1px;background:#686868"></div><div class="t" style="left:719.5px;top:86.0px;color:#2020d0;">Limits 1</div><div class="t" style="left:730.5px;top:97.5px;color:#2020d0;">165</div><div class="t" style="left:730.5px;top:111.0px;color:#2020d0;">130</div><div class="t" style="left:719.5px;top:130.5px;color:#2020d0;">Max HR</div><div class="t" style="left:730.5px;top:143.5px;color:#2020d0;">180</div><div class="t" style="left:719.5px;top:157.0px;color:#2020d0;">Rest HR</div><div class="t" style="left:732px;top:170.0px;color:#2020d0;">60</div><svg width="800" height="488" viewBox="0 0 800 488" style="position:absolute;left:0;top:0"><rect x="3.3" y="429.5" width="794" height="52.2" fill="none" stroke="#5c5c5c" stroke-width="0.9"/><line x1="3.3" y1="447.5" x2="797.3" y2="447.5" stroke="#5c5c5c" stroke-width="0.9"/><line x1="3.3" y1="465.0" x2="797.3" y2="465.0" stroke="#5c5c5c" stroke-width="0.9"/><line x1="77.6" y1="429.5" x2="77.6" y2="481.7" stroke="#5c5c5c" stroke-width="0.9"/><line x1="296.4" y1="429.5" x2="296.4" y2="465" stroke="#5c5c5c" stroke-width="0.9"/><line x1="372.4" y1="429.5" x2="372.4" y2="465" stroke="#5c5c5c" stroke-width="0.9"/><line x1="486.6" y1="429.5" x2="486.6" y2="481.7" stroke="#5c5c5c" stroke-width="0.9"/><line x1="567" y1="429.5" x2="567" y2="447.5" stroke="#5c5c5c" stroke-width="0.9"/><line x1="641.7" y1="429.5" x2="641.7" y2="447.5" stroke="#5c5c5c" stroke-width="0.9"/><line x1="716" y1="429.5" x2="716" y2="447.5" stroke="#5c5c5c" stroke-width="0.9"/></svg><div class="t" style="left:12.5px;top:434.7px;color:#2020b0;">Person</div><div class="t" style="left:12.5px;top:451.8px;color:#2020b0;">Exercise</div><div class="t" style="left:12.5px;top:469.5px;color:#2020b0;">Note</div><div class="t" style="left:82.5px;top:434.7px;color:#2a2a2a;">Khosit</div><div class="t" style="left:82.5px;top:451.8px;color:#2a2a2a;">mountain5</div><div class="t" style="left:302.5px;top:434.7px;color:#2020b0;">Date</div><div class="t" style="left:302.5px;top:451.8px;color:#2020b0;">Time</div><div class="t" style="left:377.5px;top:434.7px;color:#2a2a2a;">05/07/2008</div><div class="t" style="left:377.5px;top:451.8px;color:#2a2a2a;">6:41:25.0</div><div class="t" style="left:492px;top:434.7px;color:#2020b0;">Average</div><div class="t" style="left:573.5px;top:434.7px;color:#2a2a2a;">144 bpm</div><div class="t" style="left:647.5px;top:434.7px;color:#2020b0;">Recovery</div><div class="t" style="left:721.5px;top:434.7px;color:#2a2a2a;">85 bpm</div><div class="t" style="left:496.5px;top:451.8px;color:#2a2a2a;">Duration of exercise: 3:08:15.8</div><div class="t" style="left:496.5px;top:469.5px;color:#2a2a2a;">Selected period: 0:00:00.0 - 3:08:15.0 (3:08:15.0)</div>
<div style="position:absolute;left:0;top:0;width:800px;height:10px;background:linear-gradient(90deg,#161616 0%,#202020 15%,#404040 40%,#606060 65%,#848484 100%)"></div><div style="position:absolute;left:0;top:10px;width:800px;height:30px;background:#ebebeb;border-bottom:1px solid #b4b4b4;box-sizing:content-box"></div><div class="c" style="left:12px;top:1.2px;color:#fff;font-size:6.8px;transform:scaleX(0.925);transform-origin:0 0">Polar Training Advisor - [Curve]</div><div style="position:absolute;left:2.2px;top:1px;width:4.4px;height:8.4px;background:#a8a8a8;border-radius:2.2px 2.2px 1px 1px"></div><div style="position:absolute;left:5.8px;top:4.8px;width:4px;height:3.6px;background:#2030e8;border-radius:1.5px"></div><div style="position:absolute;left:2.6px;top:12.3px;width:8.2px;height:7.3px;background:linear-gradient(#70708c 0 22%,#b83848 22% 48%,#b0b078 48% 68%,#4444c4 68% 100%)"></div><div class="c" style="left:14px;top:11.6px;font-size:6.6px;color:#282828"><u style="text-underline-offset:0.2px;text-decoration-thickness:0.6px">F</u>ile</div><div class="c" style="left:30px;top:11.6px;font-size:6.6px;color:#282828"><u style="text-underline-offset:0.2px;text-decoration-thickness:0.6px">E</u>dit</div><div class="c" style="left:47px;top:11.6px;font-size:6.6px;color:#282828"><u style="text-underline-offset:0.2px;text-decoration-thickness:0.6px">V</u>iew</div><div class="c" style="left:65px;top:11.6px;font-size:6.6px;color:#282828"><u style="text-underline-offset:0.2px;text-decoration-thickness:0.6px">T</u>ools</div><div class="c" style="left:86px;top:11.6px;font-size:6.6px;color:#282828"><u style="text-underline-offset:0.2px;text-decoration-thickness:0.6px">R</u>eports</div><div class="c" style="left:114px;top:11.6px;font-size:6.6px;color:#282828"><u style="text-underline-offset:0.2px;text-decoration-thickness:0.6px">O</u>ptions</div><div class="c" style="left:141px;top:11.6px;font-size:6.6px;color:#282828"><u style="text-underline-offset:0.2px;text-decoration-thickness:0.6px">W</u>indow</div><div class="c" style="left:169px;top:11.6px;font-size:6.6px;color:#282828"><u style="text-underline-offset:0.2px;text-decoration-thickness:0.6px">H</u>elp</div><div class="tb" style="left:6.9px"><svg width="13" height="12" viewBox="0 0 13 12" style="position:absolute;left:-1.4px;top:-0.9px"><path d="M3.6 6 L5.6 3 L7.8 5.8 Z" fill="#ececec" stroke="#404040" stroke-width="0.4"/><path d="M2.4 8.8 L8.4 8.8 L10.6 6 L4.6 6 Z" fill="#a4a414" stroke="#282808" stroke-width="0.6"/><path d="M7.6 3.2 Q9.6 2.8 10.4 4.6 M10.6 3.2 L10.4 4.8 L9 4.4" stroke="#101010" stroke-width="0.7" fill="none"/></svg></div><div class="tb" style="left:26.6px"><svg width="13" height="12" viewBox="0 0 13 12" style="position:absolute;left:-1.4px;top:-0.9px"><path d="M2.4 9 L2.4 4.6 L6.8 4.6 L7.2 6 L4.4 6 Z" fill="#a8a828" stroke="#404010" stroke-width="0.4"/><path d="M2.4 9 L8.4 9 L10.6 6 L4.6 6 Z" fill="#e4e458" stroke="#505010" stroke-width="0.5"/><path d="M7.8 3.2 Q9.8 2.8 10.6 4.4 M10.8 3 L10.6 4.6 L9.2 4.2" stroke="#101010" stroke-width="0.7" fill="none"/></svg></div><div class="tb" style="left:39.8px"><svg width="13" height="12" viewBox="0 0 13 12" style="position:absolute;left:-1.4px;top:-0.9px"><rect x="3" y="2.8" width="7" height="7" fill="#a2a2a2"/><rect x="4.6" y="2.8" width="3.8" height="3" fill="#c4c4c4"/><rect x="5" y="7.4" width="3" height="2.4" fill="#b8b8b8"/></svg></div><div class="tb" style="left:59.9px"><svg width="13" height="12" viewBox="0 0 13 12" style="position:absolute;left:-1.4px;top:-0.9px"><rect x="2.6" y="5.2" width="8" height="3.8" rx="1.2" fill="#383838"/><path d="M4 5.4 L4.6 2.8 L9 2.8 L8.6 5.4 Z" fill="#d8d8d8" stroke="#282828" stroke-width="0.6"/><rect x="3.6" y="7" width="5.6" height="1" fill="#c8c8c8"/></svg></div><div class="tb" style="left:79.8px"><svg width="13" height="12" viewBox="0 0 13 12" style="position:absolute;left:-1.4px;top:-0.9px"><circle cx="6.5" cy="6.2" r="4.1" fill="#6c5864"/><rect x="3.9" y="4.4" width="5.2" height="3.6" fill="#30e4e4"/><rect x="5" y="9.4" width="3" height="1" fill="#504050"/></svg></div><div class="tb" style="left:92.9px"><svg width="13" height="12" viewBox="0 0 13 12" style="position:absolute;left:-1.4px;top:-0.9px"><path d="M2.4 5 L6.6 8.6 L6.6 10 L2.4 6.4 Z" fill="#f4f4f4" stroke="#202020" stroke-width="0.4"/><path d="M6.6 8.6 L11 5.6 L11 6.8 L6.6 10 Z" fill="#282828"/><path d="M2.4 5 L7 2.4 L11 5.6 L6.6 8.6 Z" fill="#1020e8"/></svg></div><div class="tb" style="left:106px"><svg width="13" height="12" viewBox="0 0 13 12" style="position:absolute;left:-1.4px;top:-0.9px"><path d="M2.8 5.2 Q5 3.4 7.4 4.6 L7 6 L2.8 6.4 Z" fill="#e83030"/><rect x="2.8" y="6" width="5.6" height="2" fill="#38e048"/><rect x="3.4" y="7.8" width="4.6" height="1.6" fill="#e8e020"/><rect x="4.6" y="6.4" width="2" height="1.4" fill="#3080e0"/><path d="M7 2.6 L11 8.4" stroke="#181818" stroke-width="1.3"/></svg></div><div class="tb" style="left:126.8px"><svg width="13" height="12" viewBox="0 0 13 12" style="position:absolute;left:-1.4px;top:-0.9px"><path d="M2.6 3 V9.8 H10.8" stroke="#909090" stroke-width="0.5" fill="none"/><path d="M2.8 9.4 L10.2 3" stroke="#3838e0" stroke-width="1.2"/><path d="M3 7.6 L5.4 5.2 L7.6 7.4 L10.2 6.4" stroke="#d850a0" stroke-width="0.7" fill="none"/></svg></div><div class="tb" style="left:139.9px"><svg width="13" height="12" viewBox="0 0 13 12" style="position:absolute;left:-1.4px;top:-0.9px"><rect x="3" y="3.4" width="1.8" height="6.4" fill="#208838"/><rect x="3" y="3.4" width="1.8" height="2" fill="#701818"/><rect x="5.6" y="5" width="1.8" height="4.8" fill="#208838"/><rect x="5.6" y="5" width="1.8" height="1.4" fill="#701818"/><rect x="8.2" y="4" width="2" height="5.8" fill="#208838"/><rect x="8.2" y="4" width="2" height="2.2" fill="#a02020"/></svg></div><div class="tb" style="left:153px"><svg width="13" height="12" viewBox="0 0 13 12" style="position:absolute;left:-1.4px;top:-0.9px"><path d="M2.6 3 V9.8 H10.8" stroke="#909090" stroke-width="0.5" fill="none"/><path d="M2.8 9 L6.8 4 L10.4 7.8" stroke="#e85888" stroke-width="0.9" fill="none"/><path d="M3 9.6 L10.2 3.8" stroke="#48a048" stroke-width="0.8"/></svg></div><div class="tb" style="left:166.1px"><svg width="13" height="12" viewBox="0 0 13 12" style="position:absolute;left:-1.4px;top:-0.9px"><rect x="3" y="4" width="1.8" height="5.8" fill="#208838"/><rect x="5.6" y="4.8" width="1.8" height="5" fill="#208838"/><rect x="8.2" y="4" width="2" height="5.8" fill="#208838"/><path d="M2.4 6.4 H11" stroke="#e02828" stroke-width="0.9"/></svg></div><div class="tb" style="left:186.9px"><svg width="13" height="12" viewBox="0 0 13 12" style="position:absolute;left:-1.4px;top:-0.9px"><rect x="2.8" y="3" width="7.6" height="6.8" fill="#b4b4b4"/><path d="M2.8 5.2 H10.4 M2.8 7.4 H10.4 M6.4 3 V9.8" stroke="#d4d4d4" stroke-width="0.7"/></svg></div><div class="tb" style="left:206.5px"><svg width="13" height="12" viewBox="0 0 13 12" style="position:absolute;left:-1.4px;top:-0.9px"><path d="M2.8 8 Q6.4 1.6 10.6 6.6" stroke="#e03848" stroke-width="0.9" fill="none"/><path d="M2.8 9.2 H10.6" stroke="#ececec" stroke-width="0.8"/><path d="M2.8 10 H10.6" stroke="#808080" stroke-width="0.5"/></svg></div><div class="tb" style="left:219.7px"><svg width="13" height="12" viewBox="0 0 13 12" style="position:absolute;left:-1.4px;top:-0.9px"><path d="M2.4 10 L5.2 8.6 L6.8 2.8 L8.2 8 L10.8 10 Z" fill="#4848d4"/></svg></div><div class="tb" style="left:232.9px"><svg width="13" height="12" viewBox="0 0 13 12" style="position:absolute;left:-1.4px;top:-0.9px"><rect x="3.2" y="3" width="3.6" height="2.2" fill="#d82020"/><rect x="3.2" y="5.2" width="3.6" height="2.2" fill="#20c830"/><rect x="3.2" y="7.4" width="3.6" height="2.2" fill="#e8e020"/><path d="M7.8 4.6 L10.6 8.4 M10.6 4.6 L7.8 8.4" stroke="#181818" stroke-width="0.9"/></svg></div><div class="tb" style="left:246.1px"><svg width="13" height="12" viewBox="0 0 13 12" style="position:absolute;left:-1.4px;top:-0.9px"><rect x="2.8" y="3" width="7.8" height="6.8" fill="#949494"/><path d="M2.8 5 H10.6 M2.8 7.2 H10.6 M5.4 3 V9.8 M8 3 V9.8" stroke="#bcbcbc" stroke-width="0.5"/></svg></div><div style="position:absolute;left:771px;top:1px;width:8.2px;height:8px;background:#f4f4f4;box-shadow:inset -0.7px -0.7px 0 #707070"><svg width="8.2" height="8" viewBox="0 0 8.2 8" style="position:absolute;left:0;top:0"><path d="M2 5.8 H5" stroke="#000" stroke-width="1"/></svg></div><div style="position:absolute;left:780px;top:1px;width:8.2px;height:8px;background:#f4f4f4;box-shadow:inset -0.7px -0.7px 0 #707070"><svg width="8.2" height="8" viewBox="0 0 8.2 8" style="position:absolute;left:0;top:0"><path d="M3.2 1.8 H6.2 V4.6 M2 3.2 H5 V6 H2 Z" stroke="#000" stroke-width="0.8" fill="none"/></svg></div><div style="position:absolute;left:790.4px;top:1px;width:8.2px;height:8px;background:#f4f4f4;box-shadow:inset -0.7px -0.7px 0 #707070"><svg width="8.2" height="8" viewBox="0 0 8.2 8" style="position:absolute;left:0;top:0"><path d="M2.3 2 L6 6 M6 2 L2.3 6" stroke="#000" stroke-width="1"/></svg></div><div style="position:absolute;left:772px;top:12.8px;width:8.2px;height:8px;background:#f4f4f4;box-shadow:inset -0.7px -0.7px 0 #707070"><svg width="8.2" height="8" viewBox="0 0 8.2 8" style="position:absolute;left:0;top:0"><path d="M2 5.8 H5" stroke="#000" stroke-width="1"/></svg></div><div style="position:absolute;left:780.6px;top:12.8px;width:8.2px;height:8px;background:#f4f4f4;box-shadow:inset -0.7px -0.7px 0 #707070"><svg width="8.2" height="8" viewBox="0 0 8.2 8" style="position:absolute;left:0;top:0"><path d="M3.2 1.8 H6.2 V4.6 M2 3.2 H5 V6 H2 Z" stroke="#000" stroke-width="0.8" fill="none"/></svg></div><div style="position:absolute;left:791px;top:12.8px;width:8.2px;height:8px;background:#f4f4f4;box-shadow:inset -0.7px -0.7px 0 #707070"><svg width="8.2" height="8" viewBox="0 0 8.2 8" style="position:absolute;left:0;top:0"><path d="M2.3 2 L6 6 M6 2 L2.3 6" stroke="#000" stroke-width="1"/></svg></div><div style="position:absolute;left:700.3px;top:24.8px;width:19.7px;height:19.9px;background:linear-gradient(#3838a0 0 45%,#30d8e8 45% 92%,#b0d060 92% 100%);border:0.5px solid #707080;box-sizing:border-box"></div><div class="c" style="left:703px;top:23.9px;font-size:5px;color:#c8d0ff;letter-spacing:-0.2px">4113KB</div><div style="position:absolute;left:0;top:484.6px;width:800px;height:1.1px;background:#989898"></div><div style="position:absolute;left:0;top:485.7px;width:800px;height:2.3px;background:#f0f0f0"></div><div style="position:absolute;left:0;top:485.7px;width:14px;height:2.3px;background:#c4c8cc"></div><div style="position:absolute;left:14px;top:485.7px;width:379px;height:2.3px;background:#303a46"></div><div style="position:absolute;left:685px;top:485.7px;width:27px;height:2.3px;background:#2c3640"></div><div style="position:absolute;left:712px;top:485.7px;width:88px;height:2.3px;background:#a8a8a8"></div>
</body></html>
